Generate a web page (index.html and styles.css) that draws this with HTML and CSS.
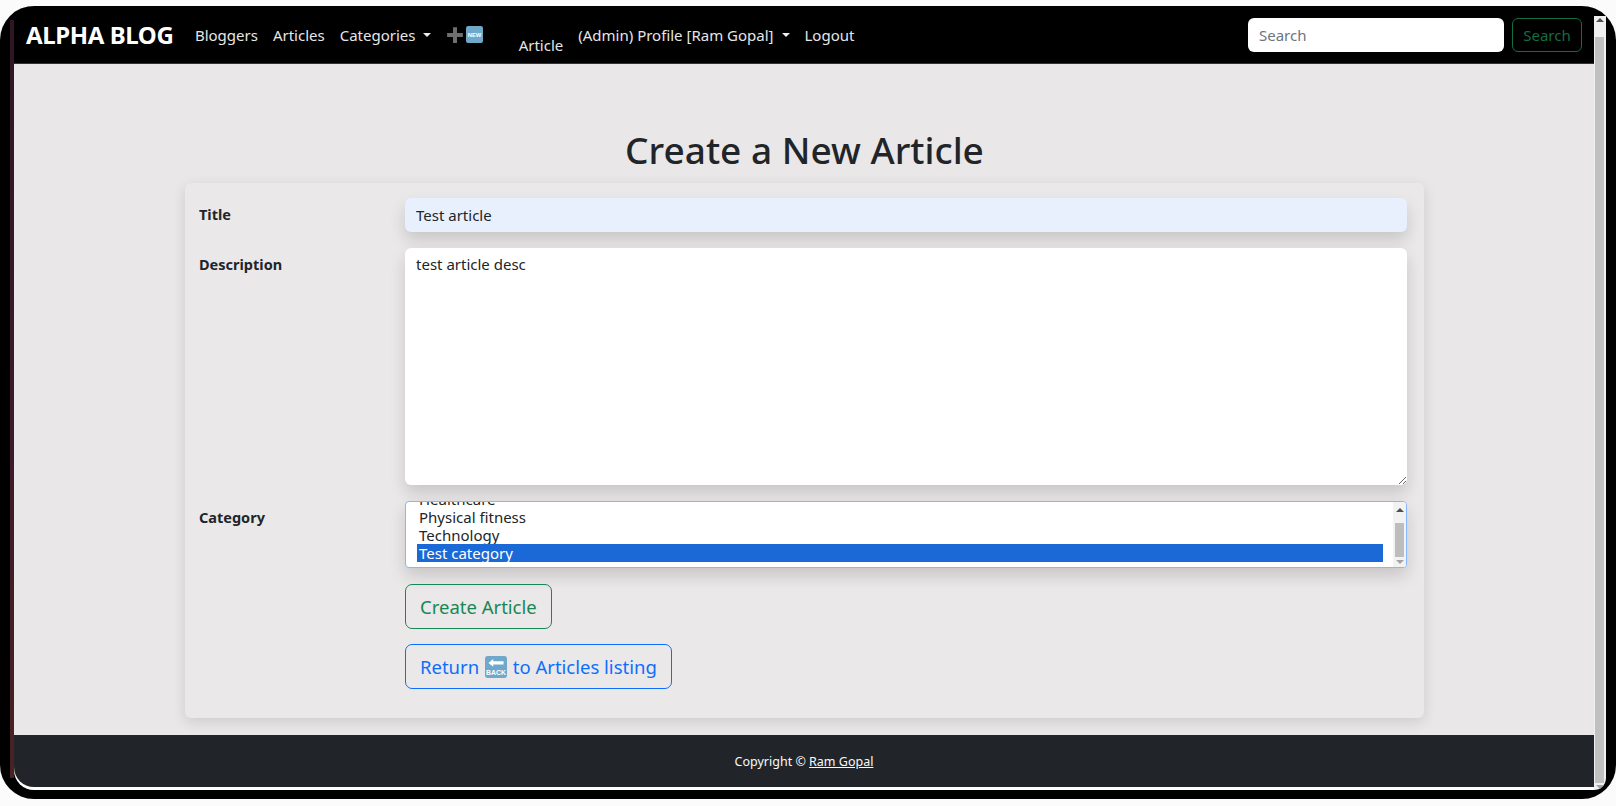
FILE: index.html
```html
<!DOCTYPE html>
<html lang="en">
<head>
<meta charset="utf-8">
<title>Create a New Article</title>
<link rel="stylesheet" href="styles.css">
</head>
<body>
<div class="frame">
  <div class="stripe"></div>
  <div class="page">
    <nav class="nav">
      <a class="brand">ALPHA BLOG</a>
      <a class="link">Bloggers</a>
      <a class="link">Articles</a>
      <a class="link caret">Categories</a>
      <a class="link">
        <svg class="emoji-plus" viewBox="0 0 16 16"><path d="M6.2 1h3.6v5.2H15v3.6H9.800V15H6.200V9.800H1V6.200h5.200z"/></svg>
        <svg class="emoji-new" viewBox="0 0 16 16"><rect width="16" height="16" rx="2" fill="#6fa8c9"/><text x="8" y="10.500" text-anchor="middle" font-size="5.500" font-family="Liberation Sans" font-weight="700" fill="#fff">NEW</text></svg>
        Article</a>
      <a class="link caret">(Admin) Profile [Ram Gopal]</a>
      <a class="link">Logout</a>
      <form class="search">
        <input class="search-input" placeholder="Search">
        <button class="search-btn" type="button">Search</button>
      </form>
    </nav>
    <main class="main">
      <h1 class="heading">Create a New Article</h1>
      <form class="card">
        <div class="row">
          <label class="label">Title</label>
          <input class="control filled" value="Test article">
        </div>
        <div class="row">
          <label class="label">Description</label>
          <textarea class="control area">test article desc</textarea>
        </div>
        <div class="row">
          <label class="label">Category</label>
          <div class="listbox">
            <div class="options">
              <div class="option">Healthcare</div>
              <div class="option">Physical fitness</div>
              <div class="option">Technology</div>
              <div class="option selected">Test category</div>
            </div>
            <div class="list-scroll">
              <span class="arrow up"></span>
              <span class="list-thumb"></span>
              <span class="arrow down"></span>
            </div>
          </div>
        </div>
        <div class="actions">
          <button class="btn green" type="button">Create Article</button>
          <button class="btn blue" type="button">Return
            <svg class="emoji-back" viewBox="0 0 16 16"><rect width="16" height="16" rx="2" fill="#6fa8c9"/><path d="M2.500 5 6 2.200v1.700h7.500v2.200H6v1.700z" fill="#fff"/><text x="8" y="14" text-anchor="middle" font-size="5" font-family="Liberation Sans" font-weight="700" fill="#fff">BACK</text></svg>
            to Articles listing</button>
        </div>
      </form>
    </main>
    <footer class="footer">
      <span>Copyright © <a class="footer-link">Ram Gopal</a></span>
    </footer>
  </div>
  <div class="scrollbar">
    <span class="arrow up"></span>
    <span class="thumb"></span>
    <span class="arrow down"></span>
  </div>
</div>
</body>
</html>
```

FILE: styles.css
```css
* { box-sizing: border-box; }
html, body { height: 100%; overflow: hidden; }
body {
  margin: 0;
  padding: 6px 0 7px;
  background: #fbfbfb;
  font-family: "Noto Sans", "Open Sans", sans-serif;
  font-size: 15px;
  color: #212529;
}
.frame {
  display: flex;
  height: 793px;
  padding: 0 10px 9px;
  background: #000;
  border-radius: 34px;
  overflow: hidden;
}
.stripe {
  width: 4px;
  margin-top: 14px;
  margin-bottom: 12px;
  background: linear-gradient(#2e1626, #3c1a2c 50%, #4a2222);
  flex: none;
}
.page {
  flex: 1;
  min-width: 0;
  display: flex;
  flex-direction: column;
  background: #fff;
  border-bottom-left-radius: 20px;
  padding-bottom: 3px;
}
.nav {
  flex: none;
  height: 58px;
  display: flex;
  align-items: center;
  padding: 0 12px;
  background: #000;
  border-bottom: 1px solid #333;
}
.brand {
  margin-right: 14px;
  font-size: 24px;
  font-weight: 700;
  letter-spacing: -0.4px;
  color: #fff;
}
.link {
  display: flex;
  align-items: center;
  padding: 0 7.5px;
  color: #e6e6e6;
  white-space: pre;
}
.caret::after {
  content: "";
  margin-left: 8px;
  border-top: 4.800px solid #eee;
  border-left: 4.800px solid transparent;
  border-right: 4.800px solid transparent;
}
.emoji-plus { width: 18px; height: 18px; fill: #6e6e6e; margin-right: 2px; }
.emoji-new { width: 17px; height: 17px; margin-right: 4px; }
.emoji-back { width: 22px; height: 22px; vertical-align: -4px; margin: 0 1px; }
.search {
  margin-left: auto;
  display: flex;
  gap: 8px;
  margin-top: 1px;
}
.search-input {
  width: 256px;
  height: 34px;
  padding: 0 11px;
  border: 0;
  border-radius: 6px;
  background: #fff;
  font: inherit;
}
.search-input::placeholder { color: #6c757d; }
.search-btn {
  width: 70px;
  height: 34px;
  padding: 0;
  border: 1px solid #146c43;
  border-radius: 6px;
  background: transparent;
  color: #146c43;
  font: inherit;
}
.main {
  flex: 1;
  background: #e9e7e8;
  padding: 0 170px 15px 171px;
}
.heading {
  margin: 62px 0 9px;
  text-align: center;
  font-size: 37px;
  line-height: 48px;
  font-weight: 500;
  color: #212529;
}
.card {
  height: 535px;
  padding: 15px 17px 0 14px;
  background: #eae8e9;
  border-radius: 6px;
  box-shadow: 0 4px 14px rgba(0, 0, 0, .12);
}
.row {
  display: flex;
  margin-bottom: 16px;
}
.label {
  flex: none;
  width: 206px;
  padding-top: 6px;
  font-weight: 700;
  font-size: 14.500px;
}
.control {
  display: block;
  flex: 1;
  min-width: 0;
  height: 34px;
  padding: 0 11px;
  border: 0;
  border-radius: 6px;
  background: #fff;
  color: #212529;
  font: inherit;
  box-shadow: 0 8px 16px rgba(0, 0, 0, .15);
}
.filled { background: #e8f0fe; }
.area {
  height: 237px;
  padding: 6px 11px;
  resize: vertical;
}
.listbox {
  flex: 1;
  min-width: 0;
  height: 67px;
  display: flex;
  border: 1px solid #86b7fe;
  border-radius: 4px;
  background: #fff;
  box-shadow: 0 8px 16px rgba(0, 0, 0, .15);
  overflow: hidden;
}
.options {
  flex: 1;
  display: flex;
  flex-direction: column;
  justify-content: flex-end;
  padding: 0 10px 5px 11px;
  overflow: hidden;
}
.option {
  flex: none;
  height: 18px;
  line-height: 18px;
  padding-left: 2px;
}
.selected { background: #1a69d6; color: #fff; }
.list-scroll {
  flex: none;
  width: 13px;
  display: flex;
  flex-direction: column;
  align-items: center;
  padding: 6px 0 3px;
  background: #f2f2f2;
}
.list-thumb {
  flex: 1;
  width: 9px;
  margin: 11px 0 3px;
  background: #bdbdbd;
}
.arrow {
  flex: none;
  width: 0;
  height: 0;
  border-left: 4px solid transparent;
  border-right: 4px solid transparent;
}
.arrow.up { border-bottom: 4px solid #505050; }
.arrow.down { border-top: 4px solid #a3a3a3; }
.actions {
  display: flex;
  flex-direction: column;
  align-items: flex-start;
  gap: 15px;
  margin-left: 206px;
}
.btn {
  height: 45px;
  padding: 0 14px;
  border: 1px solid;
  border-radius: 7px;
  background: transparent;
  font: inherit;
  font-size: 18.500px;
}
.green { color: #198754; }
.blue { color: #0d6efd; }
.footer {
  flex: none;
  height: 52px;
  display: flex;
  align-items: center;
  justify-content: center;
  background: #212529;
  color: #f8f9fa;
  font-size: 12.500px;
  border-bottom-left-radius: 20px;
}
.footer-link { color: #f8f9fa; text-decoration: underline; }
.scrollbar {
  flex: none;
  width: 12px;
  display: flex;
  flex-direction: column;
  align-items: center;
  margin-top: 10px;
  padding: 2px 2px 1px 1px;
  background: #f0f0f0;
  border-bottom-right-radius: 20px;
}
.thumb {
  flex: 1;
  width: 9px;
  margin: 15px 0 2px;
  background: #c0c0c0;
}
```
